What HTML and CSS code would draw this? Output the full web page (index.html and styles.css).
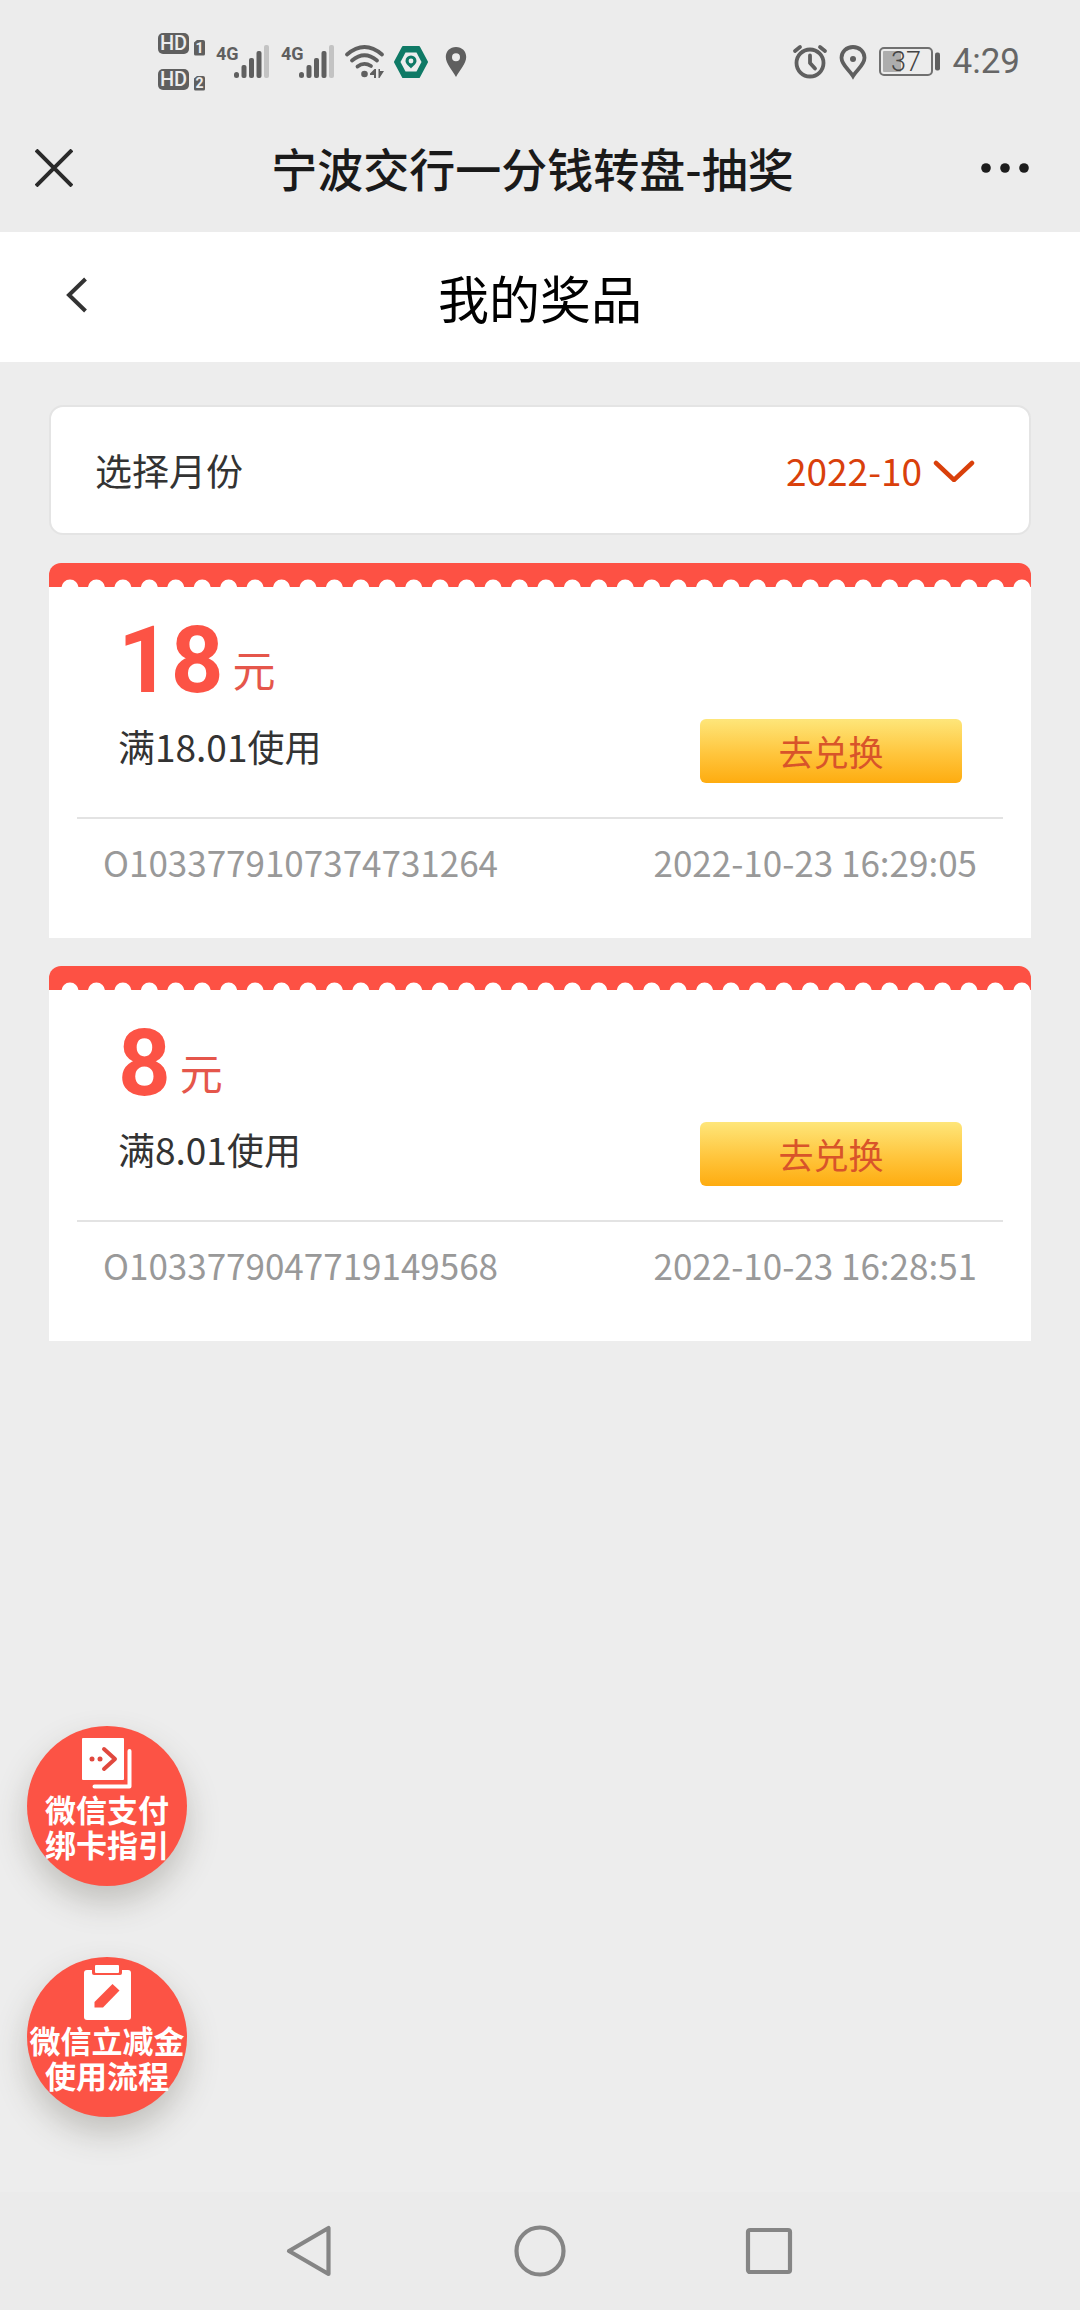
FILE: index.html
```html
<!DOCTYPE html>
<html lang="zh-CN">
<head>
<meta charset="utf-8">
<meta name="viewport" content="width=device-width, initial-scale=1">
<title>宁波交行一分钱转盘-抽奖</title>
<link rel="stylesheet" href="styles.css">
</head>
<body>
<div class="status-bar">
  <div class="status-group">
    <svg class="status-icon" width="48" height="58" viewBox="0 0 48 58" aria-hidden="true">
      <rect x="0" y="0" width="31" height="21" rx="5" fill="#5f5f5f"/>
      <text class="badge-text" x="15.5" y="17" text-anchor="middle">HD</text>
      <path d="M36 9.500l3-2.500h6a2 2 0 0 1 2 2v12a1.500 1.500 0 0 1-1.500 1.500h-8a1.500 1.500 0 0 1-1.500-1.500z" fill="#5f5f5f"/>
      <text class="sim-text" x="41.500" y="20" text-anchor="middle">1</text>
      <rect x="0" y="36" width="31" height="21" rx="5" fill="#5f5f5f"/>
      <text class="badge-text" x="15.5" y="53" text-anchor="middle">HD</text>
      <path d="M36 45.500l3-2.500h6a2 2 0 0 1 2 2v11a1.500 1.500 0 0 1-1.500 1.500h-8a1.500 1.500 0 0 1-1.500-1.500z" fill="#5f5f5f"/>
      <text class="sim-text" x="41.500" y="55" text-anchor="middle">2</text>
    </svg>
    <svg class="status-icon" width="55" height="42" viewBox="0 -4 55 42" aria-hidden="true">
      <text class="net-text" x="0" y="15">4G</text>
      <g fill="#5f5f5f">
        <rect x="18" y="27" width="5" height="6" rx="2.500"/><rect x="25.500" y="20" width="5" height="13" rx="2"/>
        <rect x="33" y="13" width="5" height="20" rx="2"/><rect x="40.500" y="6" width="5" height="27" rx="2"/>
      </g>
      <rect x="48" y="0" width="5" height="33" rx="2" fill="#c3c3c3"/>
    </svg>
    <svg class="status-icon" width="54" height="42" viewBox="0 -4 54 42" aria-hidden="true">
      <text class="net-text" x="0" y="15">4G</text>
      <g fill="#5f5f5f">
        <rect x="18" y="27" width="5" height="6" rx="2.500"/><rect x="25.500" y="20" width="5" height="13" rx="2"/>
        <rect x="33" y="13" width="5" height="20" rx="2"/><rect x="40.500" y="6" width="5" height="27" rx="2"/>
      </g>
      <rect x="48" y="0" width="5" height="33" rx="2" fill="#c3c3c3"/>
    </svg>
    <svg class="status-icon" width="39" height="34" viewBox="0 0 39 34" aria-hidden="true">
      <g fill="none" stroke="#5f5f5f" stroke-width="3.800" stroke-linecap="round">
        <path d="M2 9.500Q19.500-5.500 37 9.500"/><path d="M7 15.500Q19.500 5 32 15.500"/><path d="M12.500 21.500Q19 16.500 26 21"/>
      </g>
      <circle cx="19.500" cy="29" r="3.300" fill="#5f5f5f"/>
      <path d="M31 24v9h-2v-3h-4v-1.500l4.500-4.500z M33.500 24l1.500 0v2l4 0-4.500 7h-1v-9z" fill="#5f5f5f"/>
    </svg>
    <svg class="status-icon hex-icon" width="34" height="32" viewBox="0 0 34 32" aria-hidden="true">
      <path d="M9 1h16l8 15-8 15H9L1 16z" fill="#0f7a66" stroke="#0f7a66" stroke-width="2" stroke-linejoin="round"/>
      <path d="M11.500 6.500h11l5 9.500-5 9.500h-11l-5-9.500z" fill="#ededed"/>
      <path d="M17 22.500c-2-2.500-5.500-4.500-5.500-7.500a5.500 5.500 0 0 1 11 0c0 3-3.500 5-5.500 7.500z" fill="#0f7a66"/>
      <circle cx="17" cy="15" r="2.400" fill="#ededed"/>
    </svg>
    <svg class="status-icon pin-icon" width="22" height="32" viewBox="0 0 22 32" aria-hidden="true">
      <path fill-rule="evenodd" d="M11 1C5 1 .8 5.300.8 11 .8 18 7.500 24 11 31c3.500-7 10.200-13 10.200-20C21.200 5.300 17 1 11 1zm0 6.300a4 4 0 1 1 0 8 4 4 0 0 1 0-8z" fill="#5f5f5f"/>
    </svg>
  </div>
  <div class="status-group status-right">
    <svg class="status-icon" width="34" height="34" viewBox="0 0 34 34" aria-hidden="true">
      <g fill="none" stroke="#5f5f5f" stroke-width="3.800" stroke-linecap="round" stroke-linejoin="round">
        <circle cx="17" cy="18" r="13.500"/><path d="M17 10.500V18l5 5.500M2 6l5-4M32 6l-5-4"/>
      </g>
    </svg>
    <svg class="status-icon" width="28" height="34" viewBox="0 0 28 34" aria-hidden="true">
      <path d="M14 2C7.400 2 2.500 6.800 2.500 12.800 2.500 20 10 24.500 14 31c4-6.500 11.500-11 11.500-18.200C25.500 6.800 20.600 2 14 2z" fill="none" stroke="#5f5f5f" stroke-width="3.800"/>
      <circle cx="14" cy="14" r="3" fill="#5f5f5f"/>
    </svg>
    <svg class="status-icon" width="62" height="30" viewBox="0 0 62 30" aria-hidden="true">
      <rect x="1" y="1" width="52" height="27" rx="4" fill="none" stroke="#707070" stroke-width="2"/>
      <rect x="4" y="4" width="18" height="21" rx="1" fill="#adadad"/>
      <text class="battery-text" x="27" y="24" text-anchor="middle">37</text>
      <rect x="56" y="5.500" width="5" height="18" rx="2" fill="#5f5f5f"/>
    </svg>
    <time class="clock">4:29</time>
  </div>
</div>

<header class="title-bar">
  <button class="icon-button" type="button" aria-label="关闭">
    <svg width="38" height="38" viewBox="0 0 38 38"><path d="M1 1l36 36M37 1L1 37" stroke="#2a2a2a" stroke-width="4" fill="none"/></svg>
  </button>
  <span class="app-title">宁波交行一分钱转盘-抽奖</span>
  <button class="icon-button more-button" type="button" aria-label="更多">
    <svg width="50" height="12" viewBox="0 0 50 12" fill="#1c1c1c"><circle cx="6" cy="6" r="4.800"/><circle cx="25" cy="6" r="4.800"/><circle cx="44" cy="6" r="4.800"/></svg>
  </button>
</header>

<div class="page-header">
  <button class="icon-button" type="button" aria-label="返回">
    <svg width="22" height="40" viewBox="0 0 22 40"><path d="M19.500 2L3 18l16.500 16" stroke="#333" stroke-width="4" fill="none"/></svg>
  </button>
  <h1 class="page-title">我的奖品</h1>
</div>

<main class="content">
  <div class="filter">
    <label class="filter-label" for="month">选择月份</label>
    <span class="month-picker">
      <select class="month-select" id="month"><option>2022-10</option></select>
      <svg width="42" height="24" viewBox="0 0 42 24" aria-hidden="true"><path d="M3 5l18 17L39 5" stroke="#d9400b" stroke-width="4.500" stroke-linecap="round" fill="none"/></svg>
    </span>
  </div>

  <article class="coupon">
    <svg class="coupon-edge" aria-hidden="true"><line x1="21" y1="25" x2="100%" y2="25" stroke="#fff" stroke-width="17" stroke-linecap="round" stroke-dasharray="0 26.440"/></svg>
    <div class="coupon-main">
      <div>
        <h2 class="amount">18<span class="unit">元</span></h2>
        <p class="condition">满18.01使用</p>
      </div>
      <button class="redeem" type="button">去兑换</button>
    </div>
    <div class="coupon-meta"><span>O1033779107374731264</span><time>2022-10-23 16:29:05</time></div>
  </article>

  <article class="coupon">
    <svg class="coupon-edge" aria-hidden="true"><line x1="21" y1="25" x2="100%" y2="25" stroke="#fff" stroke-width="17" stroke-linecap="round" stroke-dasharray="0 26.440"/></svg>
    <div class="coupon-main">
      <div>
        <h2 class="amount">8<span class="unit">元</span></h2>
        <p class="condition">满8.01使用</p>
      </div>
      <button class="redeem" type="button">去兑换</button>
    </div>
    <div class="coupon-meta"><span>O1033779047719149568</span><time>2022-10-23 16:28:51</time></div>
  </article>
</main>

<aside class="shortcuts">
  <button class="shortcut" type="button">
    <svg width="56" height="56" viewBox="0 0 56 56" aria-hidden="true">
      <rect x="3" y="4" width="42" height="42" rx="1" fill="#fff"/>
      <path d="M50.500 17v35.500H15.500" fill="none" stroke="#fff" stroke-width="4" stroke-linecap="round" stroke-linejoin="round"/>
      <path d="M25 15l11 10-11 10" fill="none" stroke="#e0483e" stroke-width="4" stroke-linecap="round" stroke-linejoin="round"/>
      <circle cx="13" cy="25" r="2.500" fill="#e0483e"/><circle cx="21" cy="25" r="2.500" fill="#e0483e"/>
    </svg>
    <span>微信支付<br>绑卡指引</span>
  </button>
  <button class="shortcut" type="button">
    <svg width="56" height="56" viewBox="0 0 56 56" aria-hidden="true">
      <rect x="5" y="5" width="47" height="50" rx="3" fill="#fff"/>
      <rect x="13" y="-4" width="30" height="14" rx="2" fill="#fc5345"/>
      <rect x="16" y="0" width="24" height="8" rx="1" fill="#fff"/>
      <path d="M33.500 19l7 6.500L24 42.500h-8.500V37z" fill="#fc5345"/>
    </svg>
    <span>微信立减金<br>使用流程</span>
  </button>
</aside>

<nav class="system-nav" aria-label="系统导航">
  <button class="icon-button" type="button" aria-label="后退"><svg width="54" height="54" viewBox="0 0 54 54"><path d="M45.500 4v46L6 27z" fill="none" stroke="#858585" stroke-width="4.200" stroke-linejoin="round"/></svg></button>
  <button class="icon-button" type="button" aria-label="主页"><svg width="54" height="54" viewBox="0 0 54 54"><circle cx="27" cy="27" r="23.500" fill="none" stroke="#858585" stroke-width="4.200"/></svg></button>
  <button class="icon-button" type="button" aria-label="最近任务"><svg width="54" height="54" viewBox="0 0 54 54"><rect x="5" y="6" width="42" height="42" rx="2" fill="none" stroke="#858585" stroke-width="4.200"/></svg></button>
</nav>
</body>
</html>
```
FILE: styles.css
```css
* {
  box-sizing: border-box;
}

body {
  margin: 0;
  min-height: 100vh;
  display: flex;
  flex-direction: column;
  background: #ededed;
  color: #333;
  font-family: "Noto Sans CJK SC", sans-serif;
}

button,
select {
  margin: 0;
  padding: 0;
  border: 0;
  background: none;
  color: inherit;
  font-family: inherit;
  cursor: pointer;
}

svg {
  display: block;
  flex: none;
}

h1,
h2,
p {
  margin: 0;
}

/* Phone status bar */
.status-bar {
  display: flex;
  justify-content: space-between;
  align-items: center;
  height: 108px;
  padding: 33px 60px 18px 158px;
  background: #ececec;
}

.status-group {
  display: flex;
  align-items: center;
  gap: 10px;
}

.status-right {
  gap: 12px;
}

.status-icon {
  overflow: visible;
}

.hex-icon {
  margin-right: 7px;
}

.badge-text {
  font: 500 20px Roboto, sans-serif;
  fill: #ededed;
}

.sim-text {
  font: bold 14px Roboto, sans-serif;
  fill: #ededed;
}

.net-text {
  font: bold 18px "Liberation Sans Narrow", Roboto, sans-serif;
  fill: #5f5f5f;
}

.battery-text {
  font: 27px Roboto, sans-serif;
  font-weight: 300;
  fill: #444;
}

.clock {
  font: 35px/40px Roboto, sans-serif;
  color: #666;
}

/* App title bar */
.title-bar {
  display: grid;
  grid-template-columns: 1fr auto 1fr;
  align-items: center;
  height: 124px;
  padding: 0 50px 4px 35px;
  background: #ececec;
}

.icon-button {
  display: flex;
  align-items: center;
  justify-content: center;
  justify-self: start;
}

.more-button {
  justify-self: end;
}

.app-title {
  padding-bottom: 2px;
  font-size: 46px;
  font-weight: 500;
  line-height: 60px;
  color: #1a1a1a;
}

.page-header {
  display: grid;
  grid-template-columns: 22px 1fr 22px;
  align-items: center;
  height: 130px;
  padding: 0 66px;
  background: #fff;
}

.page-title {
  text-align: center;
  font-size: 51px;
  font-weight: 400;
  line-height: 70px;
  color: #000;
}

/* Prize list */
.content {
  display: flex;
  flex-direction: column;
  gap: 28px;
  padding: 43px 49px 28px;
}

.filter {
  display: flex;
  justify-content: space-between;
  align-items: center;
  height: 130px;
  padding: 0 54px 0 44px;
  border: 2px solid #e4e4e4;
  border-radius: 14px;
  background: #fff;
}

.filter-label {
  font-size: 37px;
  line-height: 54px;
}

.month-picker {
  display: flex;
  align-items: center;
  gap: 10px;
  color: #d9400b;
}

.month-select {
  appearance: none;
  font-size: 37px;
  line-height: 54px;
}

.coupon {
  background: #fff;
  border-radius: 14px 14px 0 0;
}

.coupon-edge {
  width: 100%;
  height: 24px;
  border-radius: 12px 12px 0 0;
  background: #fd5144;
}

.coupon-main {
  display: flex;
  justify-content: space-between;
  align-items: flex-end;
  padding: 20px 69px 34px;
}

.amount {
  display: flex;
  align-items: flex-end;
  gap: 9px;
  margin-bottom: 4px;
  font-family: Roboto, sans-serif;
  font-size: 92px;
  font-weight: 700;
  line-height: 108px;
  color: #fc5345;
}

.unit {
  padding-bottom: 22px;
  font-family: "Noto Sans CJK SC", sans-serif;
  font-size: 43px;
  font-weight: 400;
  line-height: 50px;
  color: #e5564b;
}

.condition {
  margin-bottom: 10px;
  font-size: 37px;
  line-height: 54px;
}

.redeem {
  width: 262px;
  height: 64px;
  border-radius: 6px;
  background: linear-gradient(#fee67a, #ffc53c 55%, #feac10);
  font-size: 35px;
  line-height: 64px;
  color: #d8542a;
}

.coupon-meta {
  display: flex;
  justify-content: space-between;
  margin: 0 28px;
  padding: 18px 26px 51px;
  border-top: 2px solid #e3e3e3;
  font-size: 35px;
  line-height: 50px;
  color: #999;
}

/* Round shortcuts above the system navigation */
.shortcuts {
  display: flex;
  flex-direction: column;
  align-items: flex-start;
  gap: 71px;
  margin-top: auto;
  padding: 0 27px 75px;
}

.shortcut {
  display: flex;
  flex-direction: column;
  align-items: center;
  gap: 1px;
  width: 160px;
  height: 160px;
  padding-top: 8px;
  border-radius: 50%;
  background: #fc5345;
  box-shadow: 0 16px 32px rgba(70, 65, 50, 0.26);
  font-size: 31px;
  font-weight: 700;
  line-height: 35px;
  white-space: nowrap;
  color: #fff;
}

.system-nav {
  display: flex;
  justify-content: center;
  align-items: center;
  gap: 176px;
  height: 118px;
  background: #ebebeb;
}
```
